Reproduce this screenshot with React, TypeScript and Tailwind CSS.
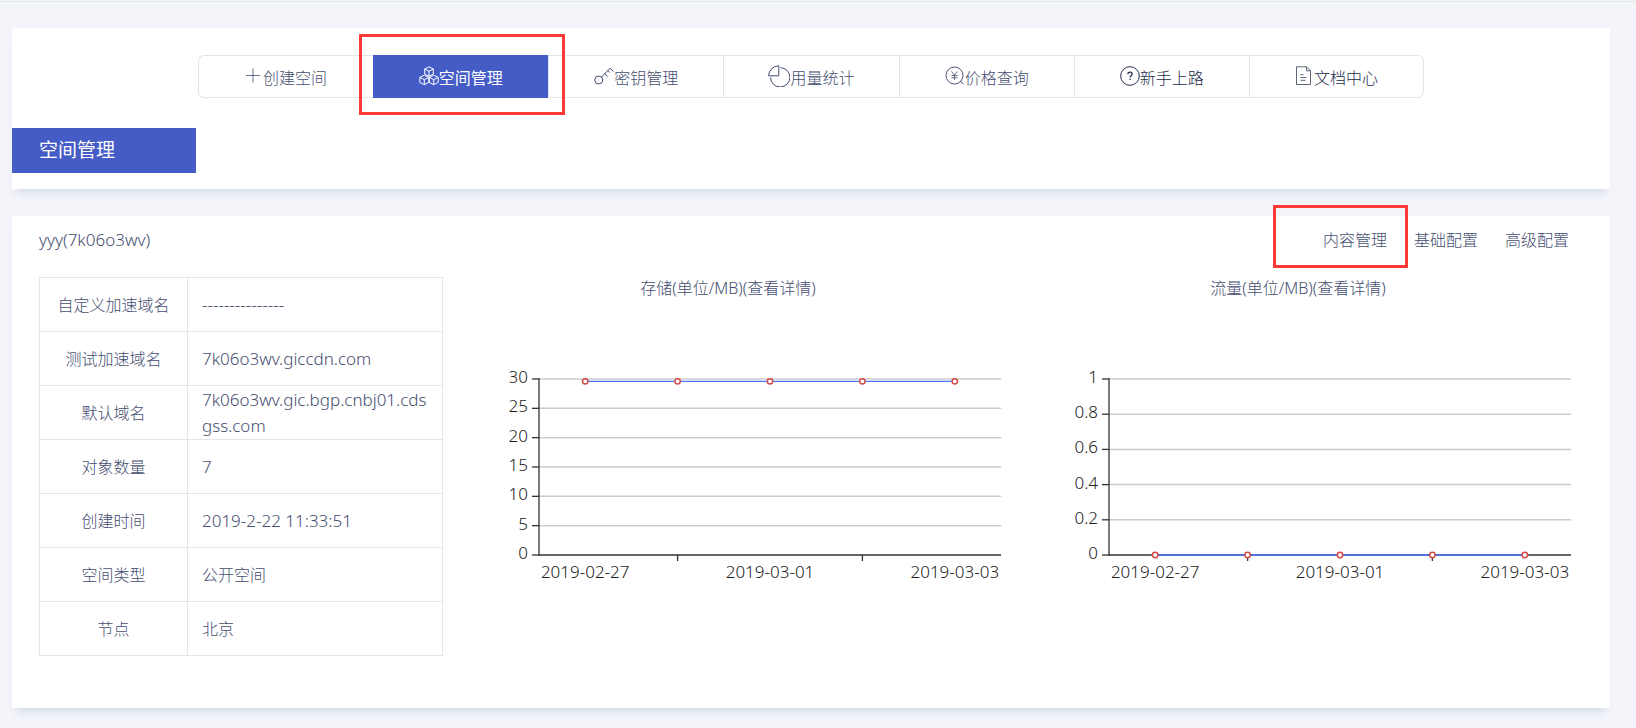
import type { ReactNode } from "react";

function Icon({ children, size = 20 }: { children: ReactNode; size?: number }) {
  return (
    <svg
      width={size}
      height={size}
      viewBox={`0 0 ${size} ${size}`}
      fill="none"
      stroke="currentColor"
      strokeWidth="1"
      className="mb-1 shrink-0"
      aria-hidden="true"
    >
      {children}
    </svg>
  );
}

const PlusIcon = () => (
  <Icon size={18}>
    <path d="M1 8.5h14M8 1.5v14" opacity="0.800" />
  </Icon>
);

const CubesIcon = () => (
  <Icon>
    <path d="M10 .8l4.3 2.2v5L10 10.3 5.700 8V3zM5.700 3L10 5.200 14.300 3M10 5.200v5" />
    <path d="M5.300 9.200l4.500 2.200v5l-4.500 2.300L.8 16.400v-5zM.8 11.400l4.500 2.200 4.500-2.200M5.300 13.600v5" />
    <path d="M14.700 9.200l4.500 2.200v5l-4.500 2.300-4.500-2.300v-5zM10.200 11.400l4.500 2.200 4.500-2.200M14.700 13.600v5" />
  </Icon>
);

const KeyIcon = () => (
  <Icon>
    <circle cx="4.700" cy="14" r="4" />
    <path d="M7.600 11L16 2.200l3.500 3.300M15.700 6.300l-2-1.800M10.800 7.600l3 3" />
  </Icon>
);

const PieIcon = () => (
  <Icon size={22}>
    <path d="M10.800 .8v10H.6A10.200 10.200 0 0 1 10.800.8z" />
    <path d="M12.500 2.600a9.700 9.700 0 1 1-10 10" />
  </Icon>
);

const PriceIcon = () => (
  <Icon>
    <circle cx="9.500" cy="9.500" r="8.500" />
    <path d="M15 15l3.500 3" />
    <path d="M6.500 5.500l3 3.500 3-3.500M9.500 9v5M6.500 9.500h6M6.500 11.700h6" strokeWidth="0.800" />
  </Icon>
);

const HelpIcon = () => (
  <Icon>
    <circle cx="10" cy="10" r="9.300" />
    <path
      d="M7.900 8.200c0-1.300.9-2 2.100-2s2.100.7 2.100 1.900c0 1.500-2 1.600-2 3.300M10.100 12.700v1.300"
      strokeWidth="1.300"
    />
  </Icon>
);

const DocIcon = () => (
  <Icon size={19}>
    <path
      d="M1.500.8h10l4 4V18.500h-14zM11.500.8v4h4M5.500 8.700h3M5.500 11.500h6M5.500 14.300h5"
      strokeWidth="0.900"
      opacity="0.800"
    />
  </Icon>
);

const menus = [
  { label: "创建空间", icon: <PlusIcon /> },
  { label: "空间管理", icon: <CubesIcon />, active: true },
  { label: "密钥管理", icon: <KeyIcon /> },
  { label: "用量统计", icon: <PieIcon /> },
  { label: "价格查询", icon: <PriceIcon /> },
  { label: "新手上路", icon: <HelpIcon />, dark: true },
  { label: "文档中心", icon: <DocIcon />, dark: true },
];

const rows = [
  { name: "自定义加速域名", value: "---------------", latin: true },
  { name: "测试加速域名", value: "7k06o3wv.giccdn.com", latin: true },
  { name: "默认域名", value: "7k06o3wv.gic.bgp.cnbj01.cdsgss.com", latin: true },
  { name: "对象数量", value: "7", latin: true },
  { name: "创建时间", value: "2019-2-22 11:33:51", latin: true },
  { name: "空间类型", value: "公开空间" },
  { name: "节点", value: "北京" },
];

const dates = ["2019-02-27", "2019-02-28", "2019-03-01", "2019-03-02", "2019-03-03"];

type ChartProps = {
  title: string;
  ticks: number[];
  values: number[];
};

function Chart({ title, ticks, values }: ChartProps) {
  const left = 96;
  const right = 558;
  const top = 18;
  const bottom = 194;
  const max = ticks[ticks.length - 1];
  const step = (right - left) / dates.length;

  const toX = (i: number) => left + step * (i + 0.5);
  const toY = (v: number) => bottom - (v / max) * (bottom - top);

  return (
    <section className="min-w-0 flex-1">
      <h3 className="text-center leading-[22px]">
        {title}
        <a href="#detail">(查看详情)</a>
      </h3>
      <svg viewBox="0 0 570 230" className="mt-[62px] w-full" role="img" aria-label={title}>
        {ticks.map((t) => (
          <g key={t}>
            {t !== 0 && (
              <line x1={left} x2={right} y1={toY(t)} y2={toY(t)} stroke="#ccc" strokeWidth="1.500" />
            )}
            <line x1={left - 7} x2={left} y1={toY(t)} y2={toY(t)} stroke="#333" strokeWidth="1.300" />
            <text x={left - 11} y={toY(t) + 4} textAnchor="end" fontSize="17" fill="#222">
              {t}
            </text>
          </g>
        ))}
        <line x1={left} x2={left} y1={top - 1} y2={bottom + 1} stroke="#333" strokeWidth="1.300" />
        <line x1={left} x2={right} y1={bottom} y2={bottom} stroke="#333" strokeWidth="1.300" />
        {dates.map((d, i) =>
          i % 2 === 0 ? (
            <text key={d} x={toX(i)} y={bottom + 23} textAnchor="middle" fontSize="17" fill="#222">
              {d}
            </text>
          ) : (
            <line key={d} x1={toX(i)} x2={toX(i)} y1={bottom} y2={bottom + 6} stroke="#333" strokeWidth="1.300" />
          )
        )}
        <polyline
          points={values.map((v, i) => `${toX(i)},${toY(v)}`).join(" ")}
          fill="none"
          stroke="#4a74ff"
          strokeWidth="1.300"
        />
        {values.map((v, i) => (
          <circle key={i} cx={toX(i)} cy={toY(v)} r="2.700" fill="#fff" stroke="#d14a46" strokeWidth="1.500" />
        ))}
      </svg>
    </section>
  );
}

export default function App() {
  return (
    <div className="min-h-screen bg-[#f4f5fa] pt-px font-['Noto_Sans','Noto_Sans_CJK_SC',sans-serif] text-base font-light text-[#444e70]">
      <div className="border-t border-[#e4e7e8] pt-[26px] pr-[26px] pb-5 pl-3">
        <div className="bg-white pt-[27px] pb-4 shadow-[0_8px_8px_-4px_#d6dceb]">
          <nav className="mx-auto max-w-[1226px]">
            <ul className="grid h-[43px] grid-cols-7">
              {menus.map((m) => (
                <li
                  key={m.label}
                  className={`relative first:rounded-l-md last:rounded-r-md last:border-r ${
                    m.active ? "bg-[#455cc7] font-normal text-white" : "border-y border-l border-[#e4e5e7]"
                  } ${m.dark ? "text-[#202b49]" : ""}`}
                >
                  <a href="#menu" className="flex h-full items-center justify-center pt-0.5">
                    {m.icon}
                    <span>{m.label}</span>
                  </a>
                  {m.active && (
                    <span className="pointer-events-none absolute -top-[21px] -right-[17px] -bottom-[17px] -left-[14px] z-10 border-3 border-[#fd3838]" />
                  )}
                </li>
              ))}
            </ul>
          </nav>
          <h1 className="mt-[30px] w-[184px] bg-[#455cc7] pl-[27px] text-[19px] leading-[45px] font-normal text-white">
            空间管理
          </h1>
        </div>

        <div className="mt-[27px] bg-white px-[27px] pb-[52px] shadow-[0_8px_8px_-4px_#d6dceb]">
          <div className="flex h-[61px] justify-between pt-3">
            <h2 className="text-[17px] leading-6">yyy(7k06o3wv)</h2>
            <div className="flex gap-[27px] pr-[14px] leading-6">
              <a href="#content" className="relative">
                内容管理
                <span className="pointer-events-none absolute -top-[23px] -right-[21px] h-[63px] w-[135px] border-3 border-[#fd3838]" />
              </a>
              <a href="#basic">基础配置</a>
              <a href="#advanced">高级配置</a>
            </div>
          </div>
          <div className="flex items-start">
            <table className="w-[404px] shrink-0 table-fixed border-collapse">
              <tbody>
                {rows.map(({ name, value, latin }) => (
                  <tr key={name} className="h-[54px]">
                    <th scope="row" className="w-[148px] border border-[#e4e5e7] font-light">
                      {name}
                    </th>
                    <td
                      className={`border border-[#e4e5e7] pr-1.5 pl-[14px] leading-[26px] break-all ${
                        latin ? "text-[17px]" : ""
                      }`}
                    >
                      {value}
                    </td>
                  </tr>
                ))}
              </tbody>
            </table>
            <Chart title="存储(单位/MB)" ticks={[0, 5, 10, 15, 20, 25, 30]} values={[29.6, 29.6, 29.6, 29.6, 29.6]} />
            <Chart title="流量(单位/MB)" ticks={[0, 0.2, 0.4, 0.6, 0.8, 1]} values={[0, 0, 0, 0, 0]} />
          </div>
        </div>
      </div>
    </div>
  );
}
